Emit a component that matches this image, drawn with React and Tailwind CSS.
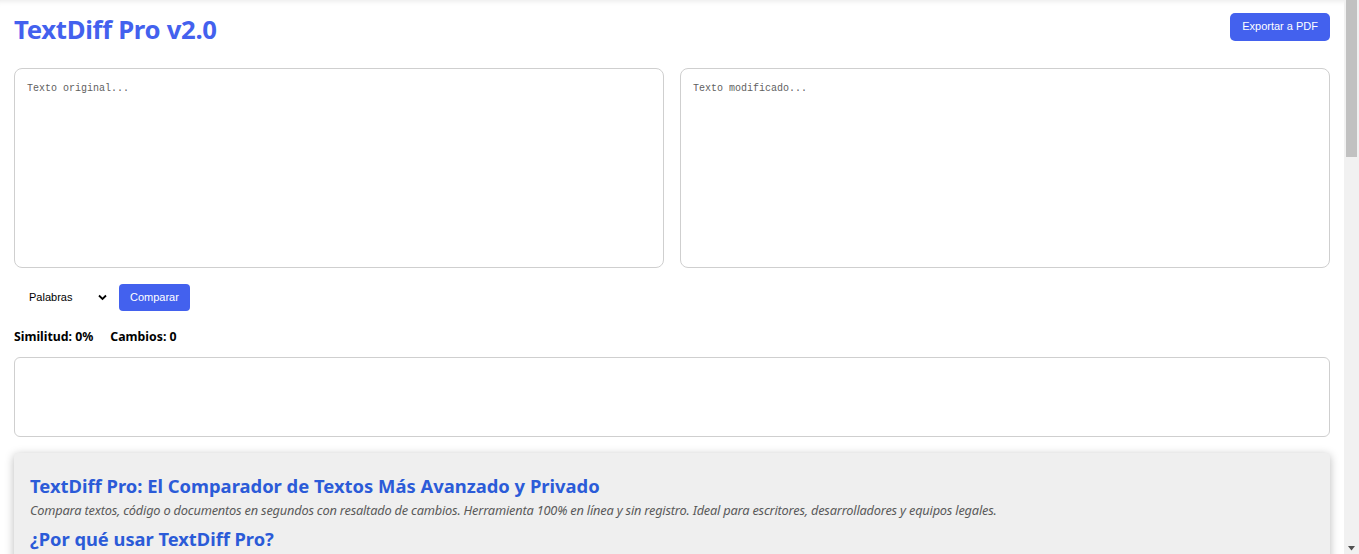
import React, { useState } from 'react';

const App = () => {
    const [original, setOriginal] = useState('');
    const [modified, setModified] = useState('');
    const [mode, setMode] = useState('palabras');

    return (
        <div className="flex h-screen bg-white font-['Noto_Sans',sans-serif]">
            <main className="flex-1 overflow-y-auto shadow-[inset_0_6px_6px_-6px_rgba(0,0,0,0.12)]">
                <div className="px-[14px] pb-10 min-h-[1900px]">
                    {/* Header */}
                    <header className="flex items-center justify-between pt-[11px] pb-[20px]">
                        <h1 className="text-[25.7px] leading-[37px] font-bold text-[#4361ee] tracking-[-0.3px]">TextDiff Pro v2.0</h1>
                        <button className="h-[28px] px-[12px] rounded-[5px] bg-[#4361ee] text-white text-[11px] font-['Liberation_Sans',sans-serif] mt-[-6px]">
                            Exportar a PDF
                        </button>
                    </header>

                    {/* Editors */}
                    <div className="grid grid-cols-2 gap-4">
                        <textarea
                            value={original}
                            onChange={(e) => setOriginal(e.target.value)}
                            placeholder="Texto original..."
                            className="h-[200px] resize-none rounded-[8px] border border-[#cfcfcf] px-3 py-[12px] text-[10px] font-['Liberation_Mono',monospace] placeholder:text-[#5f5f5f] outline-none"
                        />
                        <textarea
                            value={modified}
                            onChange={(e) => setModified(e.target.value)}
                            placeholder="Texto modificado..."
                            className="h-[200px] resize-none rounded-[8px] border border-[#cfcfcf] px-3 py-[12px] text-[10px] font-['Liberation_Mono',monospace] placeholder:text-[#5f5f5f] outline-none"
                        />
                    </div>

                    {/* Controls */}
                    <div className="flex items-center gap-[6px] mt-4 font-['Liberation_Sans',sans-serif]">
                        <div className="relative w-[99px] h-[27px]">
                            <select
                                value={mode}
                                onChange={(e) => setMode(e.target.value)}
                                className="appearance-none w-full h-full bg-white pl-[15px] text-[11px] text-black outline-none"
                            >
                                <option value="palabras">Palabras</option>
                                <option value="letras">Letras</option>
                                <option value="lineas">Líneas</option>
                            </select>
                            <svg className="absolute right-[6px] top-[10px] pointer-events-none" width="9" height="7" viewBox="0 0 9 7">
                                <path d="M1 1.5 L4.5 5 L8 1.5" fill="none" stroke="#000" strokeWidth="1.8" />
                            </svg>
                        </div>
                        <button className="h-[27px] px-[11px] rounded-[4px] bg-[#4361ee] text-white text-[11px]">Comparar</button>
                    </div>

                    {/* Stats */}
                    <div className="flex gap-[17px] mt-[18px] text-[12.3px] leading-[16px] font-bold text-black">
                        <span>Similitud: 0%</span>
                        <span>Cambios: 0</span>
                    </div>

                    {/* Result */}
                    <div className="mt-[12px] h-[80px] rounded-[6px] border border-[#cfcfcf]"></div>

                    {/* SEO section */}
                    <section className="mt-[16px] bg-[#efefef] rounded-[4px] shadow-[0_2px_10px_rgba(0,0,0,0.28)] px-4 pt-[21px] pb-6">
                        <h2 className="text-[18.4px] leading-[24px] font-bold text-[#2b5bd8]">
                            TextDiff Pro: El Comparador de Textos Más Avanzado y Privado
                        </h2>
                        <p className="mt-[3px] text-[12.8px] leading-[18px] italic text-[#5a5a5a] tracking-[-0.2px]">
                            Compara textos, código o documentos en segundos con resaltado de cambios. Herramienta 100% en línea y sin registro. Ideal para escritores, desarrolladores y equipos legales.
                        </p>
                        <h3 className="mt-[8px] text-[18.3px] leading-[24px] font-bold text-[#2b5bd8]">¿Por qué usar TextDiff Pro?</h3>
                        <ul className="mt-3 list-disc pl-6 text-[13px] text-[#333] space-y-1">
                            <li>Privacidad total: el texto nunca sale de tu navegador.</li>
                            <li>Comparación por palabras, letras o líneas.</li>
                            <li>Exporta los resultados a PDF con un clic.</li>
                        </ul>
                    </section>
                </div>
            </main>

            {/* Scrollbar drawing */}
            <aside className="w-[15px] shrink-0 flex flex-col bg-[#f1f1f1]">
                <div className="h-[157px] mx-[2px] bg-[#c1c1c1]"></div>
                <div className="flex-1"></div>
                <svg className="mx-auto mb-[3px]" width="7" height="5" viewBox="0 0 7 5">
                    <path d="M0 0 H7 L3.5 4.5 Z" fill="#505050" />
                </svg>
            </aside>
        </div>
    );
};

export default App;
